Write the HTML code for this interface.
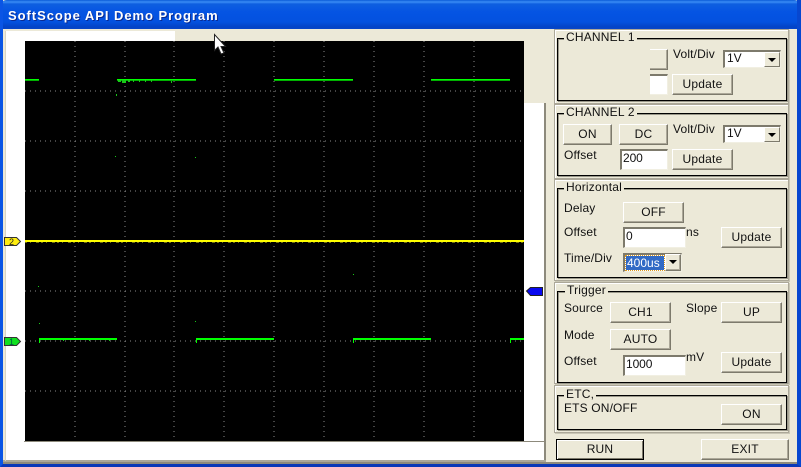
<!DOCTYPE html>
<html><head><meta charset="utf-8"><style>
html,body{margin:0;padding:0}
body{width:801px;height:467px;overflow:hidden;position:relative;background:#ece9d8;font-family:"Liberation Sans",sans-serif;font-size:12px;color:#111}
div{position:absolute;box-sizing:border-box}
.t{white-space:nowrap;line-height:14px;height:14px;letter-spacing:.15px}
.b{background:#ece9d8;border:1px solid;border-color:#fff #7d7a6c #7d7a6c #fff;box-shadow:inset -1px -1px 0 #aca899;text-align:center;white-space:nowrap;display:flex;align-items:center;justify-content:center;letter-spacing:.2px;padding-bottom:2px}
.f{border:1px solid #aca899;box-shadow:1px 1px 0 #c9c6b5,inset 1px 1px 0 #fff}
.g{border:1px solid #000;box-shadow:1px 1px 0 #9a988a,inset 1px 1px 0 #9a988a}
.l{background:#ece9d8;padding:0 2px;white-space:nowrap;line-height:13px;height:13px;letter-spacing:.2px}
.i{background:#fff;border-top:2px solid #7d7a6c;border-left:2px solid #7d7a6c;border-right:1px solid #f1efe2;border-bottom:1px solid #f1efe2;line-height:14px;padding-left:1px;white-space:nowrap;letter-spacing:-.1px}
.s{background:#fff;border-top:2px solid #7d7a6c;border-left:2px solid #7d7a6c;border-right:1px solid #f1efe2;border-bottom:1px solid #f1efe2;line-height:13px;padding-left:2px}
.a{background:#ece9d8;border:1px solid;border-color:#fff #7d7a6c #7d7a6c #fff;top:0;right:0;bottom:0;width:16px}
.a:after{content:"";position:absolute;left:3px;top:5px;border:4px solid transparent;border-top:4px solid #000;border-bottom:0}
</style></head><body>
<div style="left:0;top:0;width:801px;height:30px;border-radius:7px 7px 0 0;background:linear-gradient(#0a5bd8 0,#3a8cf5 2px,#0e5fe0 4px,#0554e3 12px,#0351df 22px,#0343c6 27px,#0a47c9 30px)"></div>
<div style="left:0;top:0;width:801px;height:467px;pointer-events:none;border-left:3px solid #0a55e5;border-right:4px solid #0747d0;border-bottom:3px solid #0a38b8"></div>
<div class="t" style="left:8px;top:8px;color:#fff;font-weight:bold;font-size:13px;letter-spacing:.95px;text-shadow:1px 1px 0 #0a2a90;height:15px;line-height:15px">SoftScope API Demo Program</div>

<!-- client -->
<div style="left:3px;top:29px;width:794px;height:435px;background:#ece9d8"></div>
<div style="left:6px;top:31px;width:538px;height:429px;background:#fff;border-right:1px solid #fff"></div>
<div style="left:175px;top:31px;width:380px;height:10px;background:#ece9d8"></div>
<div style="left:524px;top:41px;width:31px;height:62px;background:#ece9d8"></div>
<div style="left:544px;top:103px;width:2px;height:358px;background:#8d8a7c"></div>
<div style="left:3px;top:460px;width:543px;height:2px;background:#aca899"></div>
<div style="left:3px;top:462px;width:794px;height:2px;background:#8d8a7c"></div>
<div style="left:5px;top:31px;width:1px;height:430px;background:#d8d5c4"></div>

<!-- scope -->
<svg style="position:absolute;left:25px;top:41px" width="499" height="400" viewBox="0 0 499 400" shape-rendering="crispEdges">
<rect width="499" height="400" fill="#000"/>
<g stroke="#8a8a8a" stroke-width="1" stroke-dasharray="1 4">
<path d="M50 0V400M100 0V400M149 0V400M199 0V400M249 0V400M299 0V400M349 0V400M399 0V400M449 0V400"/>
<path d="M0 50H499M0 100H499M0 150H499M0 200H499M0 250H499M0 300H499M0 350H499"/>
</g>
<g fill="#00ff00">
<rect x="0" y="38" width="14" height="1"/><rect x="92" y="38" width="79" height="1"/><rect x="249" y="38" width="79" height="1"/><rect x="406" y="38" width="79" height="1"/>
<rect x="14" y="297" width="78" height="2"/><rect x="171" y="297" width="78" height="2"/><rect x="328" y="297" width="78" height="2"/><rect x="485" y="297" width="14" height="2"/>
<rect x="14" y="297" width="1" height="5"/><rect x="171" y="297" width="1" height="5"/><rect x="328" y="297" width="1" height="5"/><rect x="485" y="297" width="1" height="5"/>
</g>
<g fill="#00b000">
<rect x="0" y="39" width="14" height="1"/><rect x="92" y="39" width="79" height="1"/><rect x="249" y="39" width="79" height="1"/><rect x="406" y="39" width="79" height="1"/>
</g>
<g fill="#18c818">
<rect x="91" y="53" width="1" height="2"/><rect x="93" y="39" width="3" height="2"/><rect x="97" y="39" width="4" height="3"/><rect x="103" y="39" width="2" height="2"/><rect x="108" y="39" width="1" height="2"/><rect x="114" y="39" width="1" height="2"/><rect x="120" y="39" width="1" height="2"/><rect x="126" y="39" width="1" height="2"/><rect x="146" y="40" width="1" height="2"/>
<rect x="14" y="282" width="1" height="1"/><rect x="38" y="299" width="1" height="1"/><rect x="64" y="299" width="1" height="1"/><rect x="84" y="299" width="1" height="1"/><rect x="170" y="280" width="1" height="1"/><rect x="328" y="233" width="1" height="1"/><rect x="13" y="245" width="1" height="1"/><rect x="90" y="115" width="1" height="1"/><rect x="170" y="116" width="1" height="1"/>
</g>
<rect x="0" y="199" width="499" height="2" fill="#ffff00"/>
<path d="M0 201.500H499" stroke="#6d6a10" stroke-width="1" stroke-dasharray="2 3 1 5 3 2"/>
</svg>
<div style="left:24px;top:441px;width:520px;height:1px;background:#8d8a7c"></div>

<!-- markers -->
<svg style="position:absolute;left:0;top:230px" width="24" height="120" viewBox="0 0 24 120">
<path d="M4.500 7.500H16.500L20.500 11.500L16.500 15.500H4.500Z" fill="#ffee10" stroke="#333"/>
<text x="9" y="15" font-family="Liberation Sans" font-size="9" fill="#222">2</text>
<path d="M4.500 107.500H16.500L20.500 111.500L16.500 115.500H4.500Z" fill="#10e020" stroke="#333"/>
<text x="9" y="115" font-family="Liberation Sans" font-size="9" fill="#054">1</text>
</svg>
<svg style="position:absolute;left:524px;top:284px" width="20" height="14" viewBox="0 0 20 14">
<path d="M2.500 7L6.500 3.500H18.500V11.500H6.500Z" fill="#0808f0" stroke="#222"/>
</svg>

<!-- CH1 -->
<div class="f" style="left:554px;top:29px;width:235px;height:75px"></div>
<div class="g" style="left:557px;top:38px;width:230px;height:63px"></div>
<div class="l" style="left:564px;top:31px">CHANNEL 1</div>
<div class="b" style="left:650px;top:49px;width:18px;height:21px;border-left:0"></div>
<div class="t" style="left:673px;top:47px">Volt/Div</div>
<div class="s" style="left:723px;top:50px;width:58px;height:18px">1V<div class="a"></div></div>
<div class="i" style="left:650px;top:74px;width:18px;height:21px;border-left:0"></div>
<div class="b" style="left:672px;top:74px;width:61px;height:21px">Update</div>

<!-- CH2 -->
<div class="f" style="left:554px;top:104px;width:235px;height:75px"></div>
<div class="g" style="left:557px;top:113px;width:230px;height:63px"></div>
<div class="l" style="left:564px;top:106px">CHANNEL 2</div>
<div class="b" style="left:563px;top:124px;width:49px;height:21px">ON</div>
<div class="b" style="left:619px;top:124px;width:49px;height:21px">DC</div>
<div class="t" style="left:673px;top:122px">Volt/Div</div>
<div class="s" style="left:723px;top:125px;width:58px;height:18px">1V<div class="a"></div></div>
<div class="t" style="left:564px;top:148px">Offset</div>
<div class="i" style="left:620px;top:149px;width:48px;height:21px">200</div>
<div class="b" style="left:672px;top:149px;width:61px;height:21px">Update</div>

<!-- Horizontal -->
<div class="f" style="left:554px;top:179px;width:235px;height:102px"></div>
<div class="g" style="left:557px;top:188px;width:230px;height:90px"></div>
<div class="l" style="left:564px;top:181px">Horizontal</div>
<div class="t" style="left:564px;top:201px">Delay</div>
<div class="b" style="left:623px;top:202px;width:61px;height:21px">OFF</div>
<div class="t" style="left:564px;top:225px">Offset</div>
<div class="i" style="left:623px;top:227px;width:63px;height:21px">0</div>
<div class="t" style="left:686px;top:225px">ns</div>
<div class="b" style="left:721px;top:227px;width:61px;height:21px">Update</div>
<div class="t" style="left:564px;top:251px">Time/Div</div>
<div class="s" style="left:623px;top:253px;width:59px;height:19px"></div>
<div style="left:626px;top:256px;width:38px;height:14px;background:#316ac5;outline:1px dotted #dd9a20;color:#fff;line-height:14px;padding-left:1px;white-space:nowrap">400us</div>
<div class="b" style="left:665px;top:254px;width:16px;height:17px"></div>
<div style="left:669px;top:260px;border:4px solid transparent;border-top:4px solid #000;border-bottom:0"></div>

<!-- Trigger -->
<div class="f" style="left:554px;top:282px;width:235px;height:102px"></div>
<div class="g" style="left:557px;top:291px;width:230px;height:92px"></div>
<div class="l" style="left:565px;top:284px">Trigger</div>
<div class="t" style="left:564px;top:301px">Source</div>
<div class="b" style="left:610px;top:302px;width:61px;height:21px">CH1</div>
<div class="t" style="left:686px;top:301px">Slope</div>
<div class="b" style="left:721px;top:302px;width:61px;height:21px">UP</div>
<div class="t" style="left:564px;top:328px">Mode</div>
<div class="b" style="left:610px;top:329px;width:61px;height:21px">AUTO</div>
<div class="t" style="left:564px;top:354px">Offset</div>
<div class="i" style="left:623px;top:355px;width:63px;height:21px">1000</div>
<div class="t" style="left:686px;top:350px">mV</div>
<div class="b" style="left:721px;top:352px;width:61px;height:21px">Update</div>

<!-- ETC -->
<div class="f" style="left:554px;top:385px;width:235px;height:48px"></div>
<div class="g" style="left:557px;top:395px;width:230px;height:35px"></div>
<div class="l" style="left:564px;top:388px">ETC,</div>
<div class="t" style="left:564px;top:401px">ETS ON/OFF</div>
<div class="b" style="left:721px;top:404px;width:61px;height:21px">ON</div>

<!-- Run/Exit -->
<div class="b" style="left:556px;top:439px;width:88px;height:21px;border:1px solid #000;box-shadow:inset 1px 1px 0 #fff,inset -1px -1px 0 #7d7a6c">RUN</div>
<div class="b" style="left:701px;top:439px;width:88px;height:21px">EXIT</div>

<!-- cursor -->
<svg style="position:absolute;left:213px;top:33px" width="14" height="24" viewBox="0 0 14 24">
<path d="M1.500 1.500V17.500L5 14L8 21L11 20L8 13.500H12.500Z" fill="#fff" stroke="#222" stroke-width="1"/>
</svg>
</body></html>
